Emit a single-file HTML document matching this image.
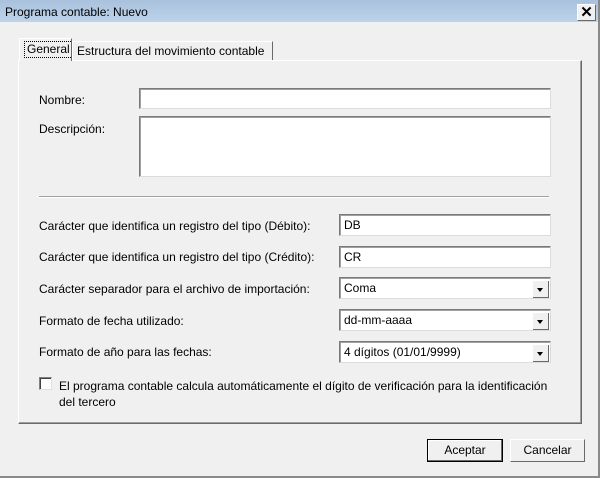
<!DOCTYPE html>
<html><head><style>
body{margin:0;width:600px;height:478px;background:#f0f0f0;font-family:"Liberation Sans",sans-serif;font-size:12px;color:#000;position:relative;overflow:hidden}
.a{position:absolute}
.title{left:0;top:0;width:598px;height:22px;background:linear-gradient(#a9c1dc,#bcd3ea)}
.inp{position:absolute;background:#fff;border:1px solid #7a7a7a;border-right-color:#dcdcdc;border-bottom-color:#dcdcdc;box-shadow:inset 1px 1px 0 #a0a0a0;box-sizing:border-box;padding:3px 4px;line-height:14px}
.dd{position:absolute;right:2px;top:2px;width:15px;height:16px;background:#f0f0f0;border-left:1px solid #fff;border-top:1px solid #fff;box-shadow:1px 1px 0 #696969}
.dd:after{content:"";position:absolute;left:4px;top:7px;border-left:3px solid transparent;border-right:3px solid transparent;border-top:4px solid #000}
.btn{position:absolute;height:23px;box-sizing:border-box;background:#f0f0f0;border:1px solid #fff;border-right-color:#696969;border-bottom-color:#696969;text-align:center;line-height:20px}
</style></head><body>
<div class="a title"></div>
<div class="a" style="left:5px;top:5px">Programa contable: Nuevo</div>
<div class="a" style="left:577px;top:4px;width:19px;height:17px;box-sizing:border-box;background:#f0f0f0;border:1px solid #fff;border-right-color:#696969;border-bottom-color:#696969;font-weight:bold;font-size:15px;text-align:center;line-height:15px">✕</div>
<div class="a" style="left:598px;top:0;width:2px;height:478px;background:#8a8a8a"></div>
<div class="a" style="left:0;top:476px;width:600px;height:2px;background:#8a8a8a"></div>
<!-- panel -->
<div class="a" style="left:18px;top:60px;width:564px;height:364px;box-sizing:border-box;border:1px solid #fff;border-right:1px solid #696969;border-bottom:1px solid #696969;box-shadow:inset -1px -1px 0 #a0a0a0"></div>
<div class="a" style="left:19px;top:38px;width:53px;height:23px;box-sizing:border-box;border:1px solid #fff;border-bottom:none;border-right:1px solid #696969;background:#f0f0f0"></div>
<div class="a" style="left:24px;top:41px;border:1px dotted #000;padding:0 2px;line-height:15px">General</div>
<div class="a" style="left:72px;top:41px;width:201px;height:19px;box-sizing:border-box;border:1px solid #fff;border-bottom:none;border-right:1px solid #696969"></div>
<div class="a" style="left:77px;top:44px">Estructura del movimiento contable</div>
<div class="a" style="left:39px;top:93px">Nombre:</div>
<div class="inp" style="left:139px;top:88px;width:412px;height:21px"></div>
<div class="a" style="left:39px;top:122px">Descripción:</div>
<div class="inp" style="left:139px;top:116px;width:412px;height:61px"></div>
<div class="a" style="left:39px;top:196px;width:510px;height:1px;background:#a0a0a0;border-bottom:1px solid #fff"></div>
<div class="a" style="left:39px;top:219px">Carácter que identifica un registro del tipo (Débito):</div>
<div class="inp" style="left:339px;top:214px;width:212px;height:22px">DB</div>
<div class="a" style="left:39px;top:250px">Carácter que identifica un registro del tipo (Crédito):</div>
<div class="inp" style="left:339px;top:246px;width:212px;height:22px">CR</div>
<div class="a" style="left:39px;top:282px">Carácter separador para el archivo de importación:</div>
<div class="inp" style="left:339px;top:277px;width:212px;height:22px">Coma<div class="dd"></div></div>
<div class="a" style="left:39px;top:314px">Formato de fecha utilizado:</div>
<div class="inp" style="left:339px;top:309px;width:212px;height:22px">dd-mm-aaaa<div class="dd"></div></div>
<div class="a" style="left:39px;top:345px">Formato de año para las fechas:</div>
<div class="inp" style="left:339px;top:341px;width:212px;height:22px">4 dígitos (01/01/9999)<div class="dd"></div></div>
<div class="a" style="left:39px;top:377px;width:13px;height:13px;box-sizing:border-box;background:#fff;border:1px solid #808080;border-right-color:#e0e0e0;border-bottom-color:#e0e0e0;box-shadow:inset 1px 1px 0 #404040"></div>
<div class="a" style="left:59px;top:378px;width:500px;line-height:16px">El programa contable calcula automáticamente el dígito de verificación para la identificación del tercero</div>
<div class="btn" style="left:427px;top:439px;width:76px;border:1px solid #000;box-shadow:inset -1px -1px 0 #696969,inset 1px 1px 0 #fff">Aceptar</div>
<div class="btn" style="left:510px;top:439px;width:75px">Cancelar</div>
</body></html>
